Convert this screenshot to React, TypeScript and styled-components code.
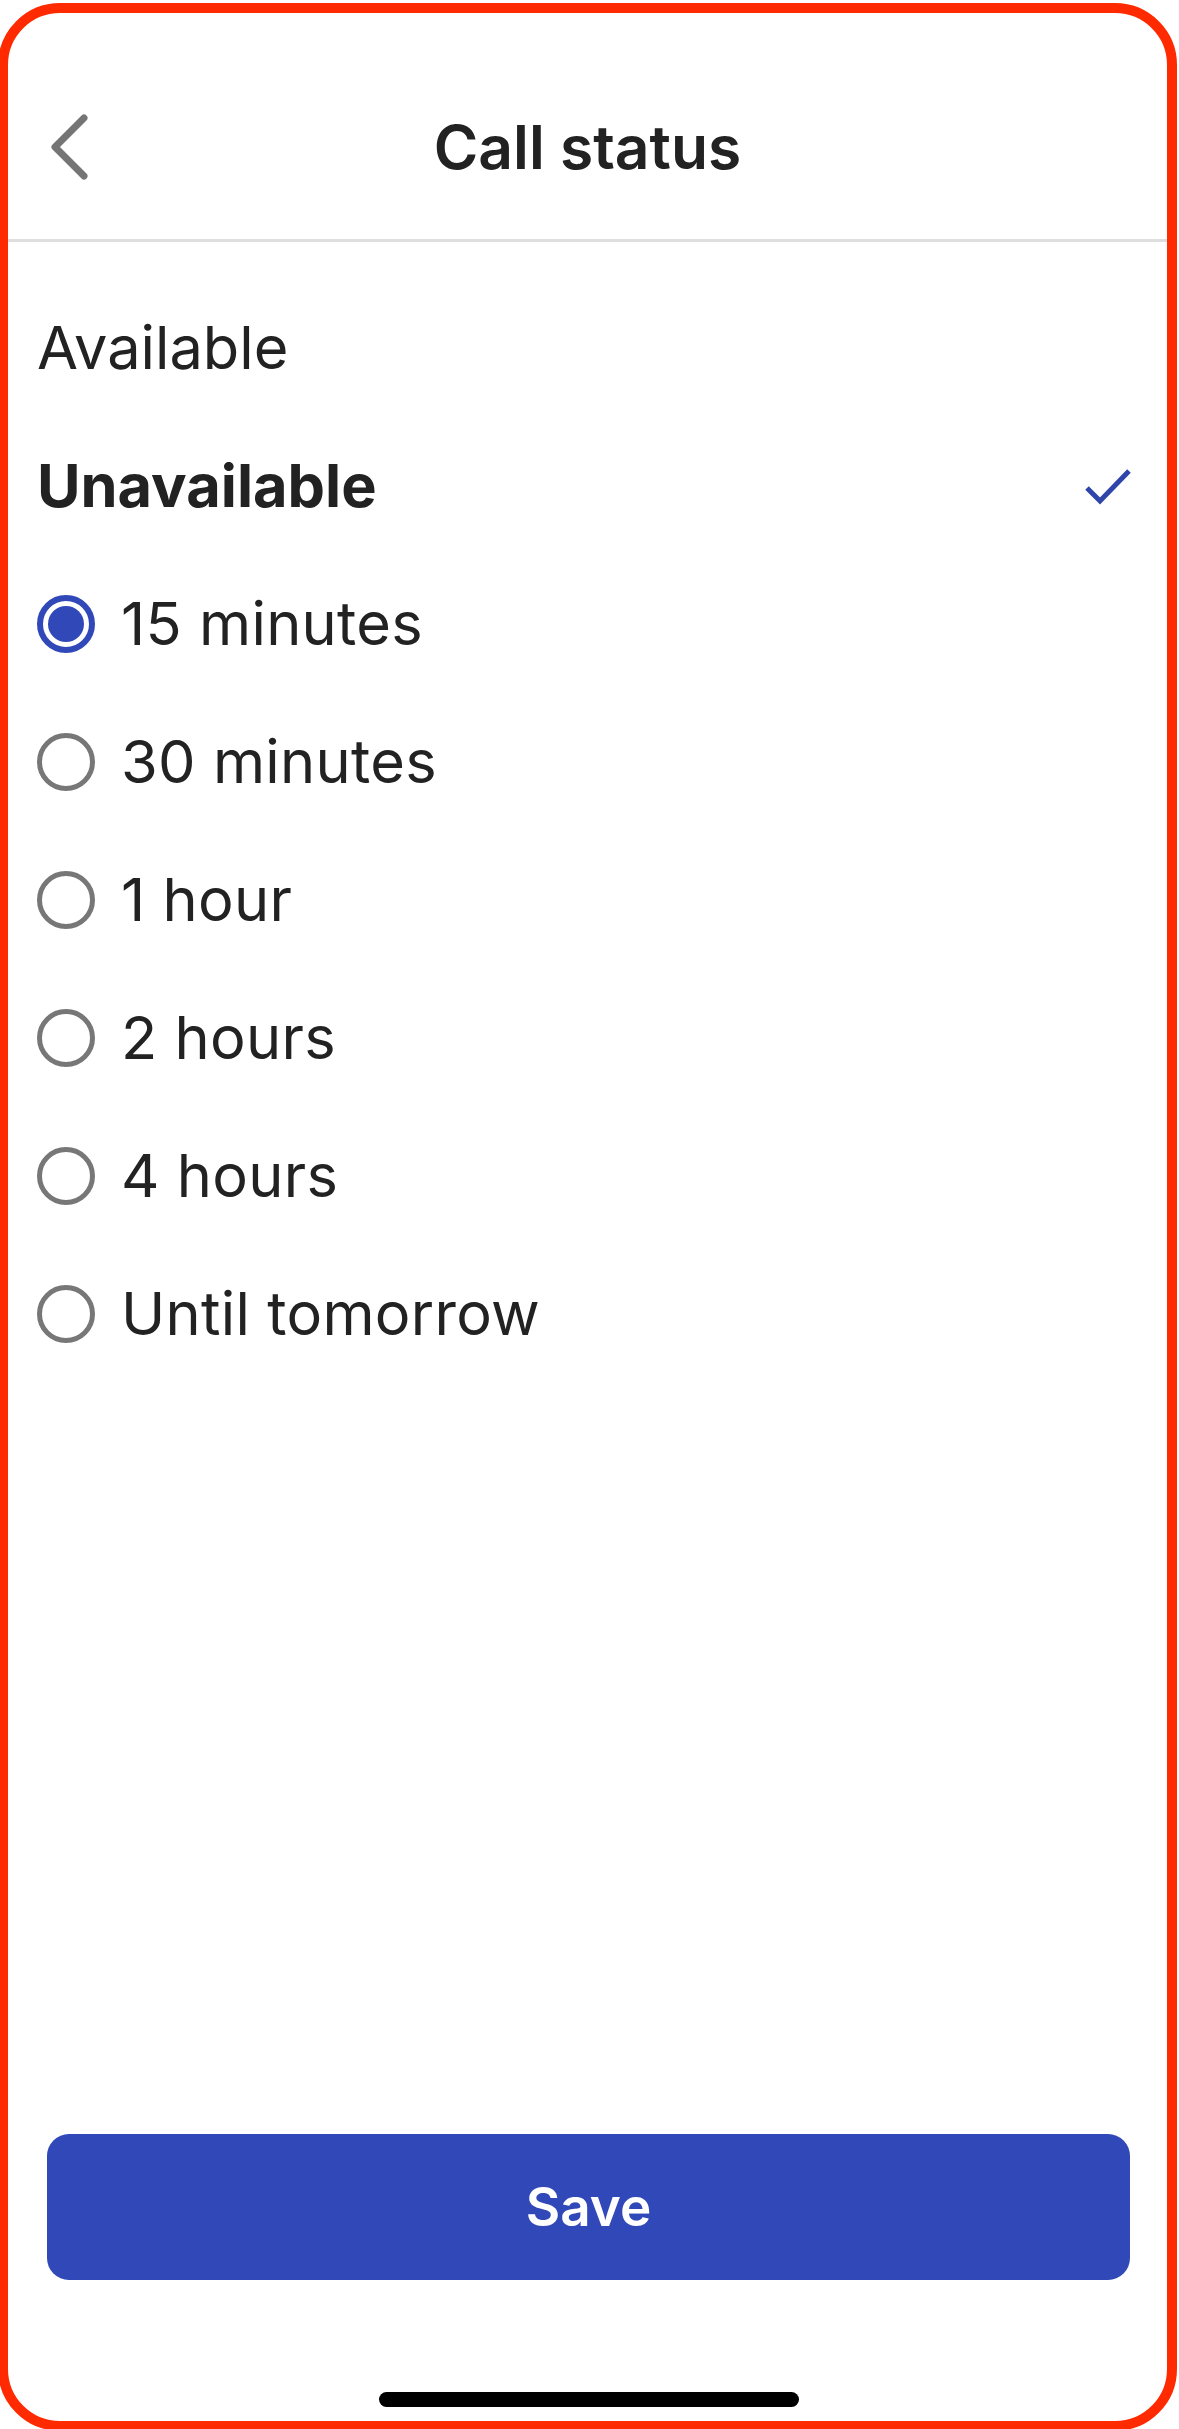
import React, { useState } from "react";
import styled, { createGlobalStyle } from "styled-components";

const GlobalStyle = createGlobalStyle`
  html, body {
    margin: 0;
    padding: 0;
    background: #ffffff;
    overflow: hidden;
  }
  body {
    font-family: Inter, "Noto Sans", "Liberation Sans", sans-serif;
    color: #222222;
  }
  * { box-sizing: border-box; }
`;

const Frame = styled.div`
  margin: 3px 0 0 -2px;
  width: 1179px;
  height: 2428px;
  border: 10px solid #ff2a00;
  border-radius: 62px;
  background: #ffffff;
  display: flex;
  flex-direction: column;
  overflow: hidden;
`;

const Header = styled.header`
  height: 229px;
  padding-top: 42px;
  display: grid;
  grid-template-columns: 1fr auto 1fr;
  align-items: center;
  border-bottom: 3px solid #dedede;
`;

const BackButton = styled.button`
  justify-self: start;
  margin-left: 40px;
  padding: 0;
  border: none;
  background: none;
  display: flex;
  color: #757575;
  cursor: pointer;
`;

const Title = styled.h1`
  margin: 0;
  font-size: 60.5px;
  font-weight: 600;
  letter-spacing: 0;
  color: #222222;
`;

const List = styled.ul`
  list-style: none;
  margin: 0;
  padding: 37px 35px 0 29px;
`;

const Row = styled.li<{ $bold?: boolean }>`
  height: 138px;
  display: flex;
  align-items: center;
  gap: 26px;
  font-size: ${(p) => (p.$bold ? "59.5px" : "59.5px")};
  font-weight: ${(p) => (p.$bold ? 700 : 400)};
  color: #222222;
  cursor: pointer;
`;

const Label = styled.span<{ $wide?: boolean }>`
  flex: 1;
  line-height: 1;
  letter-spacing: ${(p) => (p.$wide ? "0.3px" : "0")};
`;

const Radio = styled.span<{ $checked: boolean }>`
  width: 58px;
  height: 58px;
  flex: none;
  border-radius: 50%;
  border: ${(p) => (p.$checked ? "6px solid #3048b8" : "5px solid #777777")};
  display: flex;
  align-items: center;
  justify-content: center;
  &::after {
    content: "";
    width: 36px;
    height: 36px;
    border-radius: 50%;
    background: #3048b8;
    display: ${(p) => (p.$checked ? "block" : "none")};
  }
`;

const Spacer = styled.div`
  flex: 1;
`;

const Footer = styled.footer`
  padding: 0 37px 14px 39px;
  display: flex;
  flex-direction: column;
  align-items: center;
  gap: 112px;
`;

const SaveButton = styled.button`
  width: 100%;
  height: 146px;
  border: none;
  border-radius: 22px;
  background: #3048b8;
  color: #ffffff;
  font-family: Inter, "Noto Sans", "Liberation Sans", sans-serif;
  font-size: 53px;
  font-weight: 600;
  cursor: pointer;
`;

const HomeIndicator = styled.div`
  width: 420px;
  height: 15px;
  border-radius: 8px;
  background: #000000;
`;

const options = ["15 minutes", "30 minutes", "1 hour", "2 hours", "4 hours", "Until tomorrow"];

export default function App() {
  const [status, setStatus] = useState<"available" | "unavailable">("unavailable");
  const [duration, setDuration] = useState(0);

  return (
    <>
      <GlobalStyle />
      <Frame>
        <Header>
          <BackButton aria-label="Back">
            <svg width="44" height="74" viewBox="0 0 44 74" fill="none">
              <path d="M36 8 L7 37 L36 66" stroke="currentColor" strokeWidth="7" strokeLinecap="round" strokeLinejoin="round" />
            </svg>
          </BackButton>
          <Title>Call status</Title>
          <div />
        </Header>
        <List>
          <Row $bold={status === "available"} onClick={() => setStatus("available")}>
            <Label>Available</Label>
          </Row>
          <Row $bold={status === "unavailable"} onClick={() => setStatus("unavailable")}>
            <Label>Unavailable</Label>
            {status === "unavailable" && (
              <svg width="48" height="40" viewBox="0 0 48 40" fill="none">
                <path d="M3 22 L16 35 L45 5" stroke="#2f45aa" strokeWidth="5" />
              </svg>
            )}
          </Row>
          {options.map((o, i) => (
            <Row key={o} onClick={() => setDuration(i)}>
              <Radio $checked={duration === i} />
              <Label $wide>{o}</Label>
            </Row>
          ))}
        </List>
        <Spacer />
        <Footer>
          <SaveButton>Save</SaveButton>
          <HomeIndicator />
        </Footer>
      </Frame>
    </>
  );
}
